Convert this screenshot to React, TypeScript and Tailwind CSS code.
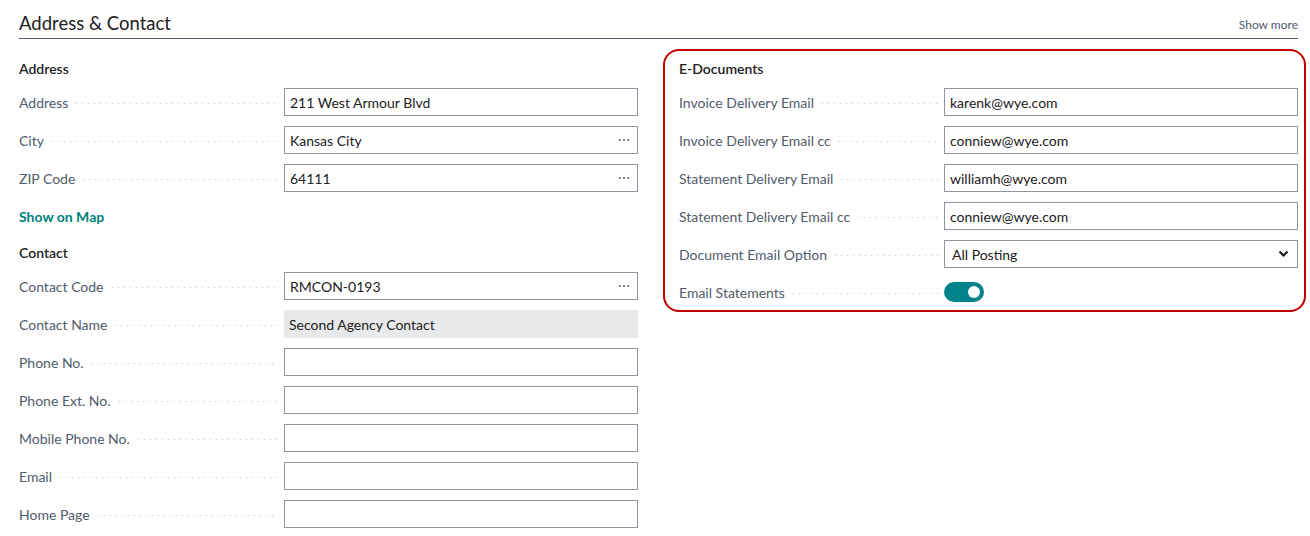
import React from "react";

const font = { fontFamily: "Lato, 'Noto Sans', sans-serif" };

function Dots() {
  return (
    <div className="flex-1 ml-2 mr-[6px] h-px bg-[linear-gradient(to_right,#c3c8ce_1px,transparent_1px)] bg-[length:6px_1px] bg-repeat-x mt-[3px]" />
  );
}

function Label({ text }: { text: string }) {
  return (
    <div className="w-[265px] shrink-0 flex items-center">
      <span className="text-[14px] text-[#505c6b] whitespace-nowrap">{text}</span>
      <Dots />
    </div>
  );
}

function Field({
  label,
  value = "",
  lookup = false,
  readOnly = false,
}: {
  label: string;
  value?: string;
  lookup?: boolean;
  readOnly?: boolean;
}) {
  return (
    <div className="flex items-center h-[28px]">
      <Label text={label} />
      <div
        className={
          readOnly
            ? "flex-1 h-[28px] bg-[#e8e9ea] flex items-center px-[5px] text-[14px] text-[#212121]"
            : "flex-1 h-[28px] border border-[#8e97a1] bg-white flex items-center pl-[5px] pr-[8px] text-[14px] text-[#212121]"
        }
      >
        <span className="flex-1 truncate">{value}</span>
        {lookup && (
          <span className="flex gap-[2px] items-center">
            <span className="w-[2px] h-[2px] bg-[#505c6b] rounded-full" />
            <span className="w-[2px] h-[2px] bg-[#505c6b] rounded-full" />
            <span className="w-[2px] h-[2px] bg-[#505c6b] rounded-full" />
          </span>
        )}
      </div>
    </div>
  );
}

function Header({ text }: { text: string }) {
  return <div className="h-[20px] flex items-center text-[14px] font-semibold text-[#212121]">{text}</div>;
}

export default function App() {
  return (
    <div className="w-[1310px] h-[536px] bg-white overflow-hidden" style={font}>
      <div className="ml-[19px] w-[1279px]">
        <div className="pt-[11px] flex items-end justify-between border-b border-[#505c6b] pb-[3px]">
          <div className="text-[18.5px] leading-[24px] text-[#212121]">Address &amp; Contact</div>
          <div className="text-[12px] leading-[16px] text-[#505c6b] mb-[2px]">Show more</div>
        </div>
        <div className="flex mt-[10px]">
          <div className="w-[619px] shrink-0 pt-[9px] flex flex-col">
            <Header text="Address" />
            <div className="flex flex-col gap-[10px] mt-[10px]">
              <Field label="Address" value="211 West Armour Blvd" />
              <Field label="City" value="Kansas City" lookup />
              <Field label="ZIP Code" value="64111" lookup />
              <div className="h-[28px] flex items-center text-[14px] font-bold text-[#00807c]">Show on Map</div>
            </div>
            <div className="mt-[12px]">
              <Header text="Contact" />
            </div>
            <div className="flex flex-col gap-[10px] mt-[10px]">
              <Field label="Contact Code" value="RMCON-0193" lookup />
              <Field label="Contact Name" value="Second Agency Contact" readOnly />
              <Field label="Phone No." />
              <Field label="Phone Ext. No." />
              <Field label="Mobile Phone No." />
              <Field label="Email" />
              <Field label="Home Page" />
            </div>
          </div>
          <div className="ml-[25px] w-[643px] shrink-0 h-[263px] border-2 border-[#c00000] rounded-[16px] pt-[7px] pl-[14px] pr-[6px] flex flex-col">
            <Header text="E-Documents" />
            <div className="flex flex-col gap-[10px] mt-[10px]">
              <Field label="Invoice Delivery Email" value="karenk@wye.com" />
              <Field label="Invoice Delivery Email cc" value="conniew@wye.com" />
              <Field label="Statement Delivery Email" value="williamh@wye.com" />
              <Field label="Statement Delivery Email cc" value="conniew@wye.com" />
              <div className="flex items-center h-[28px]">
                <Label text="Document Email Option" />
                <div className="flex-1 h-[28px] border border-[#8e97a1] bg-white flex items-center pl-[7px] pr-[8px] text-[14px] text-[#212121]">
                  <span className="flex-1">All Posting</span>
                  <svg width="11" height="8" viewBox="0 0 11 8">
                    <path d="M1.5 1.5 L5.5 5.5 L9.5 1.5" fill="none" stroke="#212121" strokeWidth="2.2" />
                  </svg>
                </div>
              </div>
              <div className="flex items-center h-[28px]">
                <Label text="Email Statements" />
                <div className="w-[40px] h-[20px] rounded-full bg-[#00838a] flex items-center justify-end pr-[4px]">
                  <div className="w-[12px] h-[12px] rounded-full bg-white" />
                </div>
              </div>
            </div>
          </div>
        </div>
      </div>
    </div>
  );
}
